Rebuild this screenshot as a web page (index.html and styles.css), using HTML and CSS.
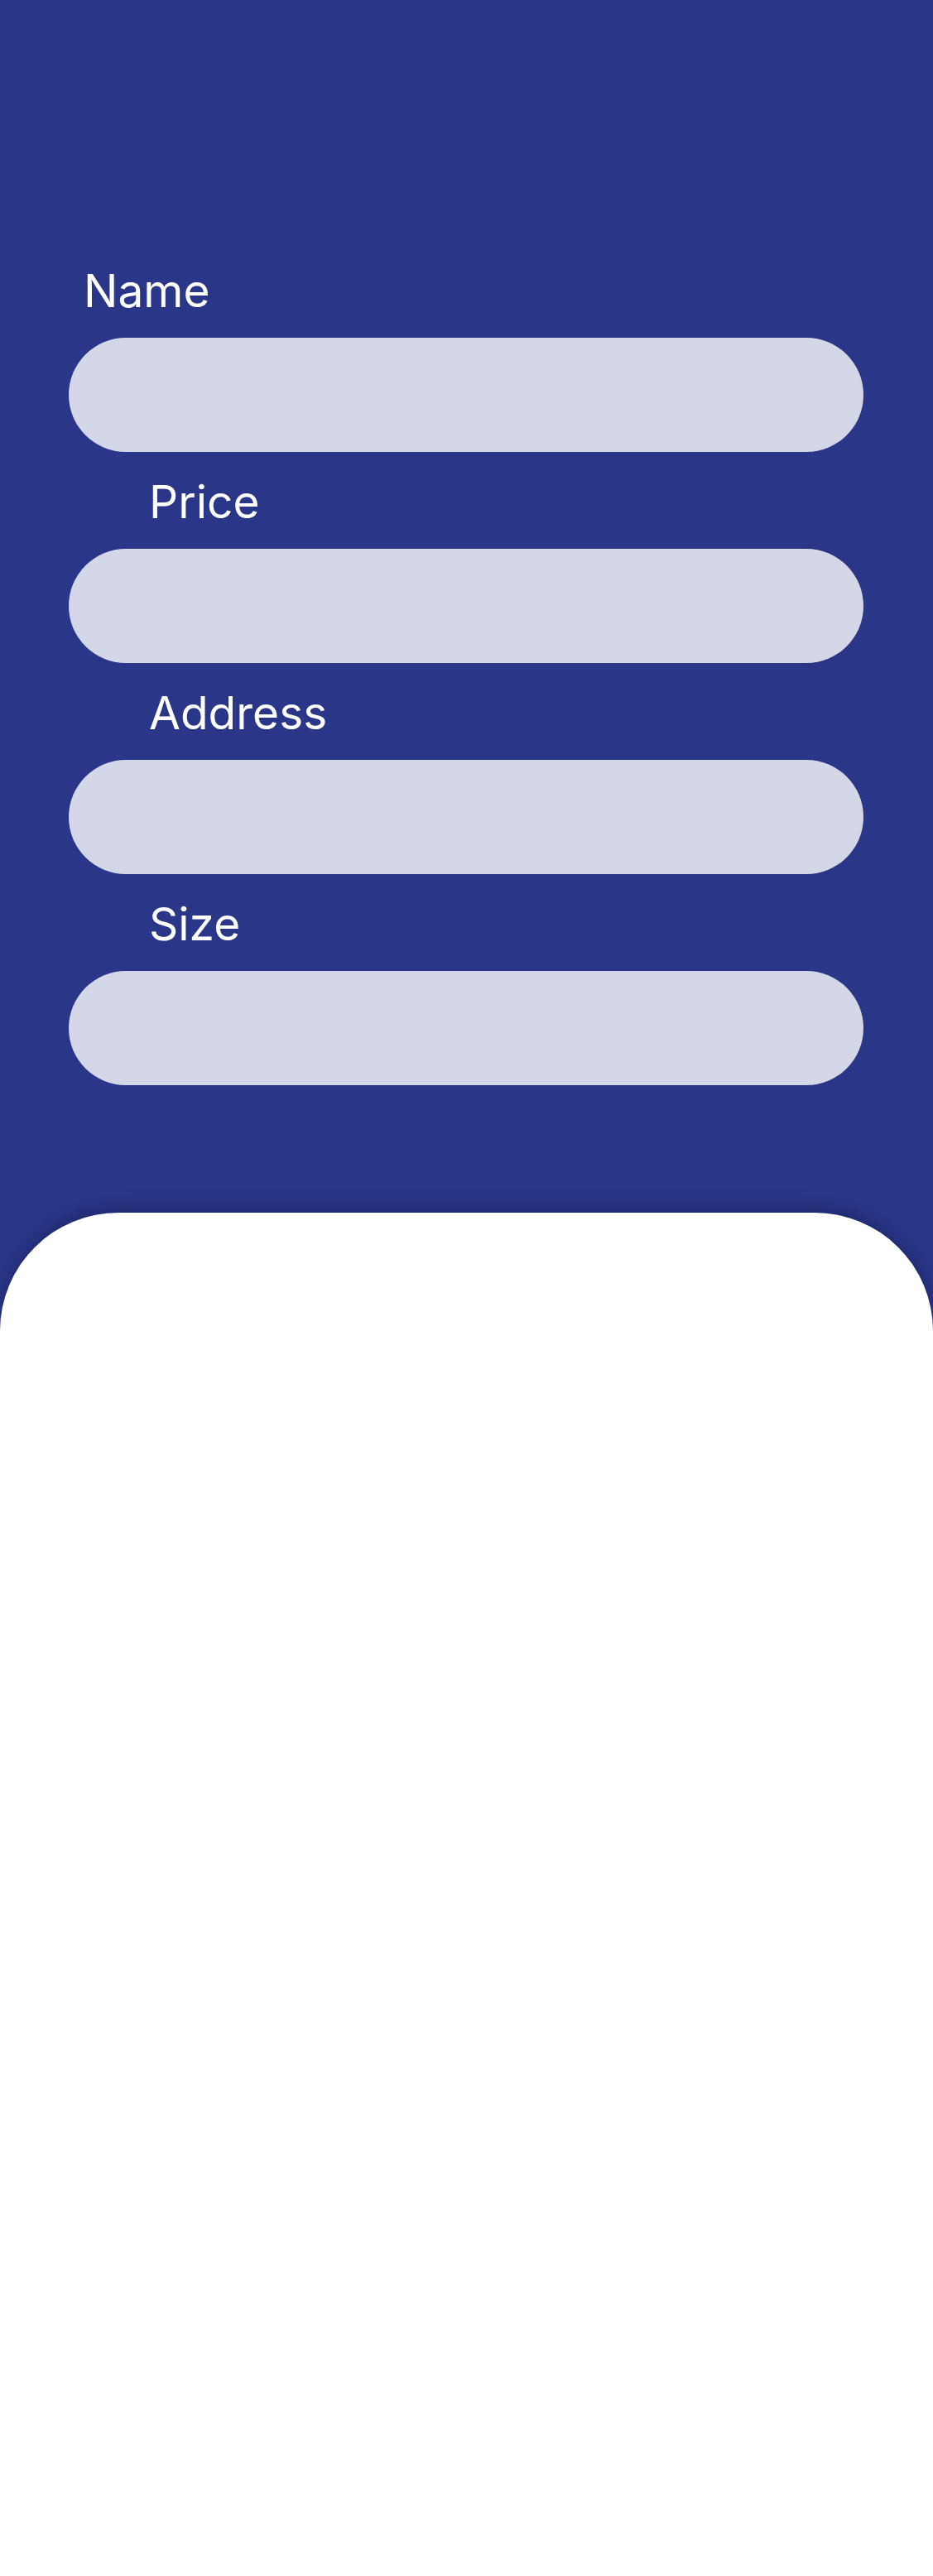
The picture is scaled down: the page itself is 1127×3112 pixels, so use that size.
FILE: index.html
```html
<!DOCTYPE html>
<html lang="en">
<head>
<meta charset="utf-8">
<title>Form</title>
<link rel="stylesheet" href="styles.css">
</head>
<body>
<div class="screen">
  <form class="form">
    <div class="field">
      <label class="label label-first">Name</label>
      <div class="input"></div>
    </div>
    <div class="field">
      <label class="label">Price</label>
      <div class="input"></div>
    </div>
    <div class="field">
      <label class="label">Address</label>
      <div class="input"></div>
    </div>
    <div class="field">
      <label class="label">Size</label>
      <div class="input"></div>
    </div>
  </form>
  <div class="sheet"></div>
</div>
</body>
</html>
```

FILE: styles.css
```css
html, body {
  margin: 0;
  padding: 0;
}
body {
  background: #2a3789;
  font-family: Inter, "Noto Sans", sans-serif;
  width: 1127px;
  height: 3112px;
  overflow: hidden;
}
.screen {
  display: flex;
  flex-direction: column;
  height: 3112px;
}
.form {
  display: flex;
  flex-direction: column;
  gap: 33px;
  padding: 324px 84px 0 83px;
}
.field {
  display: flex;
  flex-direction: column;
}
.label {
  display: block;
  color: #ffffff;
  font-size: 55px;
  line-height: 55px;
  height: 55px;
  margin: 0 0 29px 97px;
  font-weight: 400;
}
.label-first {
  margin-left: 18px;
}
.input {
  height: 138px;
  border-radius: 69px;
  background: #d4d7e8;
}
.sheet {
  margin-top: 154px;
  flex: 1;
  background: #ffffff;
  border-radius: 143px 143px 0 0;
  box-shadow: 0 -6px 22px rgba(10, 15, 50, 0.35);
}
```
